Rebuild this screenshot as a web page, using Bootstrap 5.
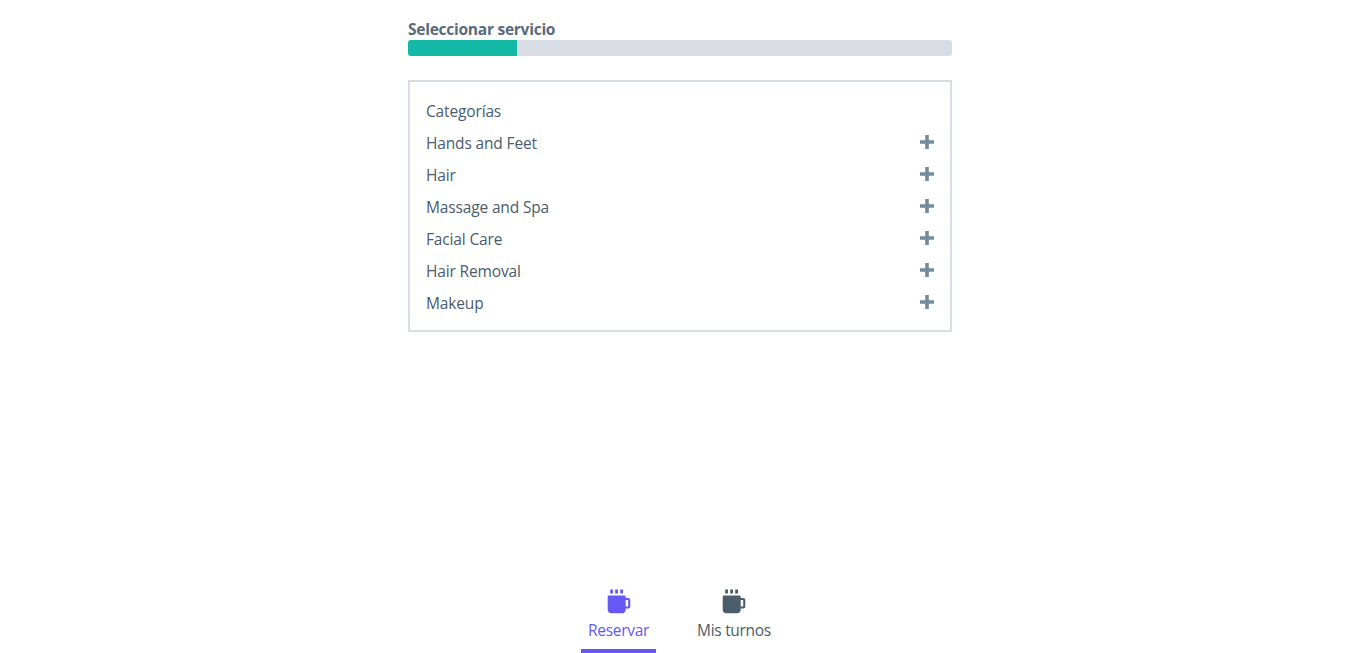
<!DOCTYPE html>
<html lang="es">
<head>
<meta charset="utf-8">
<meta name="viewport" content="width=device-width, initial-scale=1">
<title>Reservar</title>
<link href="https://cdn.jsdelivr.net/npm/bootstrap@5.3.0/dist/css/bootstrap.min.css" rel="stylesheet">
<style>
body{font-family:"Segoe UI","Open Sans",sans-serif;font-size:15.5px;line-height:24px;color:#4b5c6b;letter-spacing:-.15px}
.booking{width:544px;padding-top:19px}
.step-title{font-size:15.5px;line-height:20px;color:#596b7b;letter-spacing:-.25px;padding-bottom:1px}
.progress{--bs-progress-height:16px;--bs-progress-bg:#d8dde5;--bs-progress-border-radius:3px;--bs-progress-bar-bg:#14b8a6}
.categories{border:2px solid #d8dde4;padding:13px 16px;height:252px}
.category{height:32px}
.category svg{margin-top:-3px}
.tab-bar{gap:33px}
.tab-item{height:69px;padding:5px 0 0;border-bottom:4px solid transparent;color:#4b5c6b;width:90px;border-radius:0;gap:4px;letter-spacing:-.3px}
.tab-item.active{width:75px;color:#6558f5;border-color:#6558f5}
</style>
</head>
<body>
<div class="d-flex flex-column vh-100 overflow-hidden">
  <main class="booking mx-auto flex-grow-1">
    <h1 class="step-title fw-bold mb-0">Seleccionar servicio</h1>
    <div class="progress mb-4" role="progressbar" aria-valuenow="20" aria-valuemin="0" aria-valuemax="100">
      <div class="progress-bar" style="width:20%"></div>
    </div>
    <section class="categories">
      <div class="category d-flex align-items-center">Categorías</div>
      <div class="category d-flex align-items-center justify-content-between">Hands and Feet<svg width="14" height="14" fill="#778899"><path d="M5.2 0h3.6v5.2H14v3.6H8.8V14H5.2V8.8H0V5.2h5.2z"/></svg></div>
      <div class="category d-flex align-items-center justify-content-between">Hair<svg width="14" height="14" fill="#778899"><path d="M5.2 0h3.6v5.2H14v3.6H8.8V14H5.2V8.8H0V5.2h5.2z"/></svg></div>
      <div class="category d-flex align-items-center justify-content-between">Massage and Spa<svg width="14" height="14" fill="#778899"><path d="M5.2 0h3.6v5.2H14v3.6H8.8V14H5.2V8.8H0V5.2h5.2z"/></svg></div>
      <div class="category d-flex align-items-center justify-content-between">Facial Care<svg width="14" height="14" fill="#778899"><path d="M5.2 0h3.6v5.2H14v3.6H8.8V14H5.2V8.8H0V5.2h5.2z"/></svg></div>
      <div class="category d-flex align-items-center justify-content-between">Hair Removal<svg width="14" height="14" fill="#778899"><path d="M5.2 0h3.6v5.2H14v3.6H8.8V14H5.2V8.8H0V5.2h5.2z"/></svg></div>
      <div class="category d-flex align-items-center justify-content-between">Makeup<svg width="14" height="14" fill="#778899"><path d="M5.2 0h3.6v5.2H14v3.6H8.8V14H5.2V8.8H0V5.2h5.2z"/></svg></div>
    </section>
  </main>
  <nav class="nav tab-bar justify-content-center">
    <a class="nav-link tab-item active d-flex flex-column align-items-center" href="#">
      <svg width="24" height="25" viewBox="0 0 24 25" fill="currentColor"><path d="M3.2.6H6v3.8H3.2zM8.2.6H11v3.8H8.2zM13.2.6H16v3.8h-2.8z"/><path fill-rule="evenodd" d="M2 6.5h15.2c.9 0 1.5.6 1.5 1.5v1h2.6c1.2 0 2 .8 2 2v6.6c0 1.2-.8 2-2 2h-2.6v1.1c0 2-1.5 3.5-3.5 3.5H4.2c-2 0-3.5-1.5-3.5-3.5V8c0-.9.5-1.5 1.3-1.5zm16.7 4.6v6.4h2.5v-6.4z"/></svg>
      <span>Reservar</span>
    </a>
    <a class="nav-link tab-item d-flex flex-column align-items-center" href="#">
      <svg width="24" height="25" viewBox="0 0 24 25" fill="currentColor"><path d="M3.2.6H6v3.8H3.2zM8.2.6H11v3.8H8.2zM13.2.6H16v3.8h-2.8z"/><path fill-rule="evenodd" d="M2 6.5h15.2c.9 0 1.5.6 1.5 1.5v1h2.6c1.2 0 2 .8 2 2v6.6c0 1.2-.8 2-2 2h-2.6v1.1c0 2-1.5 3.5-3.5 3.5H4.2c-2 0-3.5-1.5-3.5-3.5V8c0-.9.5-1.5 1.3-1.5zm16.7 4.6v6.4h2.5v-6.4z"/></svg>
      <span>Mis turnos</span>
    </a>
  </nav>
</div>
<script src="https://cdn.jsdelivr.net/npm/bootstrap@5.3.0/dist/js/bootstrap.bundle.min.js"></script>
</body>
</html>
